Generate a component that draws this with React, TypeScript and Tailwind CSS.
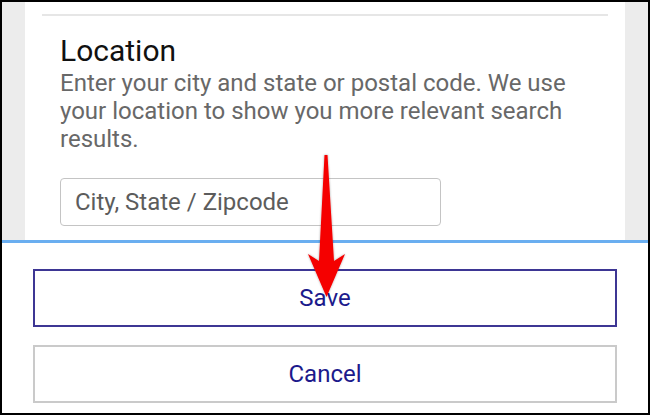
import React from "react"

function Arrow() {
  return (
    <svg
      className="absolute left-0 top-0 pointer-events-none"
      width={650}
      height={415}
      viewBox="0 0 650 415"
    >
      <defs>
        <filter id="arrowShadow" x="-50%" y="-10%" width="200%" height="120%">
          <feDropShadow dx="0" dy="0" stdDeviation="1.2" floodColor="#000" floodOpacity="0.35" />
        </filter>
      </defs>
      <polygon
        points="322.5,153 325.5,153 332,259 343,252 324.5,295 306,252 317,259"
        fill="#f50000"
        filter="url(#arrowShadow)"
      />
    </svg>
  )
}

export default function App() {
  return (
    <div
      className="relative w-[650px] h-[415px] overflow-hidden border-2 border-black bg-white flex flex-col"
      style={{ fontFamily: "Roboto, 'Liberation Sans', sans-serif" }}
    >
      {/* settings panel */}
      <div className="flex h-[238px] shrink-0">
        <div className="w-[23px] bg-[#ececec]" />
        <div className="flex-1 bg-white flex flex-col">
          <div className="mt-[12px] mx-[17px] h-[2px] bg-[#e6e6e6]" />
          <div className="pl-[35px] pr-[25px]">
            <h2 className="mt-[17px] text-[30px] leading-[36px] text-[#111]">Location</h2>
            <p className="text-[24px] leading-[28px] text-[#686868]">
              Enter your city and state or postal code. We use your location to show you more relevant search
              results.
            </p>
            <div className="mt-[25px] w-[381px] h-[48px] rounded-[4px] border border-[#c4c4c4] px-[14px] flex items-center">
              <span className="text-[24px] text-[#5c5c5c]">City, State / Zipcode</span>
            </div>
          </div>
        </div>
        <div className="w-[23px] bg-[#ececec]" />
      </div>

      <div className="h-[3px] bg-[#6aaef0] shrink-0" />

      {/* actions */}
      <div className="flex-1 flex flex-col gap-[18px] pt-[26px] pl-[31px] pr-[31px]">
        <button className="h-[58px] w-[584px] border-2 border-[#3d3694] text-[24px] text-[#1c1a8c] flex items-center justify-center">
          Save
        </button>
        <button className="h-[58px] w-[584px] border-2 border-[#cacaca] text-[24px] text-[#1c1a8c] flex items-center justify-center">
          Cancel
        </button>
      </div>

      <Arrow />
    </div>
  )
}
